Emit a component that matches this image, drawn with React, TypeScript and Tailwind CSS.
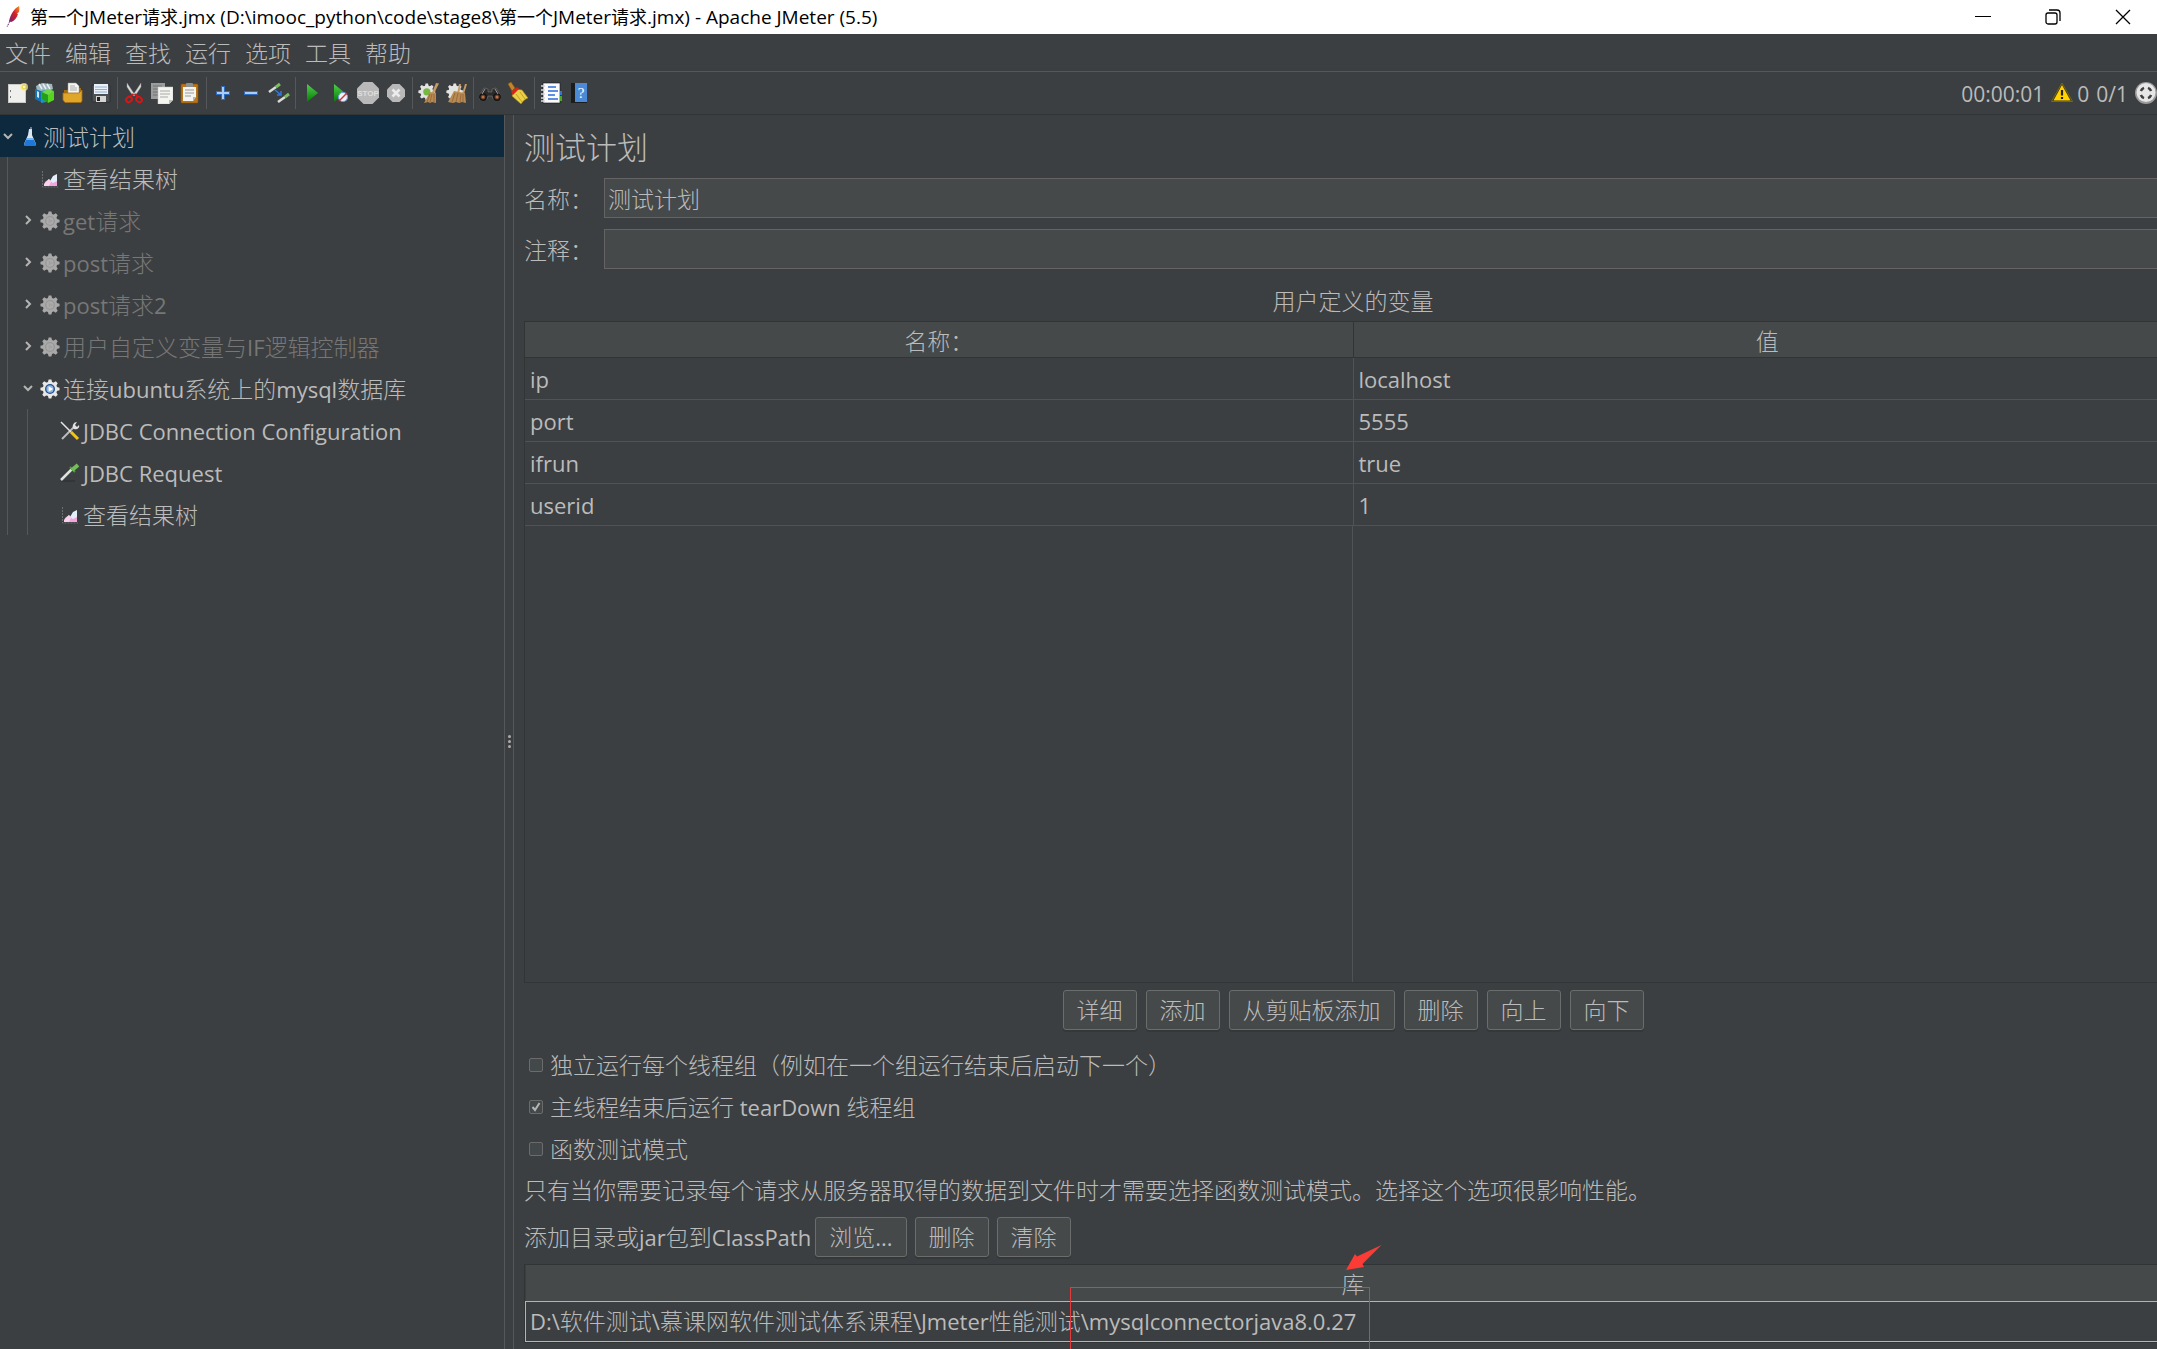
import { useState } from 'react'
import type { ReactNode } from 'react'

/* ---------- Icons ---------- */

function Feather() {
  return (
    <svg className="w-4 h-6" viewBox="0 0 16 24" aria-hidden="true">
      <defs>
        <linearGradient id="feather" x1="1" y1="0" x2="0" y2="1">
          <stop offset="0" stopColor="#f69923" />
          <stop offset="0.45" stopColor="#d22128" />
          <stop offset="1" stopColor="#6d2178" />
        </linearGradient>
      </defs>
      <path d="M13 1c-4 2-8 7-10 15l2 1c4-1 6-5 7-8l-1-.5 2-1.500c.6-3 .6-4 0-6z" fill="url(#feather)" />
      <path d="M4 16l-3 6" stroke="#6d2178" strokeWidth="1" strokeDasharray="2 1" fill="none" />
    </svg>
  )
}

function ToolSvg({ children }: { children: ReactNode }) {
  return (
    <svg className="w-[22px] h-[22px]" viewBox="0 0 22 22" aria-hidden="true">
      {children}
    </svg>
  )
}

const NewIcon = () => (
  <ToolSvg>
    <rect x="2.500" y="2.500" width="17" height="18" fill="#efefed" stroke="#c9c9c5" />
    <circle cx="18" cy="5" r="4" fill="#f6ee9a" opacity="0.7" />
    <circle cx="18" cy="5" r="2" fill="#fff6b0" stroke="#e6cf3a" />
    <path d="M4.500 8v2M4.500 14v2" stroke="#777" />
  </ToolSvg>
)

const TemplatesIcon = () => (
  <ToolSvg>
    <path d="M2 4l6-3 10 1 1 5-8 4-8-1z" fill="#9fb7bd" />
    <path d="M5 2l3 5M9 2l3 5M13 2l3 5" stroke="#e8f0f0" strokeWidth="1.500" />
    <path d="M1 7l6 2v11l-6-3z" fill="#1173b8" />
    <path d="M3 9l2 1v6l-2-1z" fill="#cfe6f5" />
    <path d="M7 9l5-1v12l-5 1z" fill="#1b95d0" />
    <path d="M8 10l6 3v8l-6-4z" fill="#22a01c" />
    <path d="M14 12l6-3v9l-6 3z" fill="#57d41e" />
    <path d="M8 10l6-3 6 2-6 4z" fill="#6fd84a" />
  </ToolSvg>
)

const OpenIcon = () => (
  <ToolSvg>
    <path d="M2 8h5l1-2h11v13H2z" fill="#a86c10" />
    <path d="M6 1h8l3 3v9H6z" fill="#f4f4f2" stroke="#999" strokeWidth="0.5" />
    <path d="M8 4h5M8 6h7M8 8h7" stroke="#aaa" />
    <path d="M1 11h16l3-3v11l-1 1.500H3L1 18z" fill="#e0a62a" stroke="#a86c10" strokeWidth="0.8" />
  </ToolSvg>
)

const SaveIcon = () => (
  <ToolSvg>
    <path d="M2 3h17l1 1v16H3l-1-1z" fill="#4e5154" stroke="#2a2c2e" strokeWidth="0.8" />
    <rect x="4" y="2" width="14" height="10" fill="#e9f0f7" />
    <path d="M5 5h12M5 7.500h12M5 10h12" stroke="#91b0d0" />
    <rect x="6" y="14" width="10" height="6" fill="#d6d6d4" />
    <rect x="7" y="15" width="3" height="4" fill="#222" />
  </ToolSvg>
)

const CutIcon = () => (
  <ToolSvg>
    <path d="M4 1l8 12-2 1L4 5zM18 1l-8 12 2 1 6-9z" fill="#dcdcda" stroke="#8c8c8a" strokeWidth="0.4" />
    <path d="M10 12l-3 3M12 12l3 3" stroke="#cc1212" strokeWidth="2" />
    <ellipse cx="6" cy="17.500" rx="3" ry="2.500" fill="none" stroke="#db1414" strokeWidth="2" transform="rotate(-35 6 17.500)" />
    <ellipse cx="16" cy="17.500" rx="3" ry="2.500" fill="none" stroke="#db1414" strokeWidth="2" transform="rotate(35 16 17.500)" />
  </ToolSvg>
)

const CopyIcon = () => (
  <ToolSvg>
    <rect x="0" y="1" width="14" height="16" fill="#9b9d9d" />
    <path d="M2 4h9M2 7h9M2 10h5M2 13h5" stroke="#6f7172" />
    <path d="M7 5h15v13l-4 4H7z" fill="#f4f4f1" stroke="#c4c4c0" strokeWidth="0.5" />
    <path d="M9 9h10M9 12h10M9 15h8" stroke="#a8a8a5" />
    <path d="M22 18h-4v4z" fill="#bcbcb8" />
  </ToolSvg>
)

const PasteIcon = () => (
  <ToolSvg>
    <rect x="2" y="2" width="17" height="19" rx="1" fill="#b9741a" stroke="#8b530c" strokeWidth="0.6" />
    <path d="M4 5h13v10l-3 4H4z" fill="#f3f3f1" />
    <rect x="7" y="1" width="7" height="4" rx="1" fill="#8d9091" />
    <path d="M6 8h9M6 11h9M6 14h6" stroke="#999" />
    <path d="M17 15h-3v4z" fill="#b5b5b0" />
  </ToolSvg>
)

const PlusIcon = () => (
  <ToolSvg>
    <path d="M11 4v14M4 11h14" stroke="#2f6cc0" strokeWidth="4" />
    <path d="M11 5v12M5 11h12" stroke="#a9cdf5" strokeWidth="2" />
  </ToolSvg>
)

const MinusIcon = () => (
  <ToolSvg>
    <path d="M4 11h14" stroke="#2f6cc0" strokeWidth="4" />
    <path d="M5 11h12" stroke="#a9cdf5" strokeWidth="2" />
  </ToolSvg>
)

const ToggleIcon = () => (
  <ToolSvg>
    <path d="M1 10l7-5" stroke="#d8dcd6" strokeWidth="2.500" />
    <path d="M8 5l4-3" stroke="#7cbf5e" strokeWidth="3" />
    <path d="M10 20l7-5" stroke="#d8dcd6" strokeWidth="2.500" />
    <path d="M17 15l4-3" stroke="#7cbf5e" strokeWidth="3" />
    <path d="M7 8l6 5M13 9v4H9" stroke="#2f78e0" strokeWidth="1.500" fill="none" />
  </ToolSvg>
)

const PlayIcon = () => (
  <ToolSvg>
    <defs>
      <linearGradient id="play" x1="0" y1="0" x2="0" y2="1">
        <stop offset="0" stopColor="#4ed04a" />
        <stop offset="1" stopColor="#067a06" />
      </linearGradient>
    </defs>
    <path d="M6 2l11 9-11 9z" fill="url(#play)" />
  </ToolSvg>
)

const PlayNoPauseIcon = () => (
  <ToolSvg>
    <path d="M5 2l11 9-11 9z" fill="url(#play)" />
    <circle cx="14" cy="15" r="4.500" fill="#eef3fb" stroke="#6d9ede" strokeWidth="1.200" />
    <path d="M10 19l8-8" stroke="#d5302c" strokeWidth="1.500" />
  </ToolSvg>
)

const StopIcon = () => (
  <ToolSvg>
    <path d="M6.500 0h9L22 6.500v9L15.500 22h-9L0 15.500v-9z" fill="#b9b9b9" />
    <text x="11" y="14" textAnchor="middle" fontSize="8" fontWeight="bold" fill="#dedede" fontFamily="Liberation Sans, sans-serif">
      STOP
    </text>
  </ToolSvg>
)

const ShutdownIcon = () => (
  <ToolSvg>
    <path d="M7.500 2h7L20 7.500v7L14.500 20h-7L2 14.500v-7z" fill="#b9b9b9" />
    <path d="M7.500 7.500l7 7M14.500 7.500l-7 7" stroke="#ececec" strokeWidth="2.500" />
  </ToolSvg>
)

// Eight-toothed wheel, shared by the toolbar and the thread groups
function GearShape({ fill }: { fill: string }) {
  return (
    <g fill={fill}>
      <circle cx="11" cy="11" r="8" />
      <path d="M9.500 0.500h3l1 4h-5zM9.500 21.500h3l1-4h-5zM.5 9.500v3l4 1v-5zM21.500 9.500v3l-4 1v-5z" />
      <path
        d="M9.500 0.500h3l1 4h-5zM9.500 21.500h3l1-4h-5zM.5 9.500v3l4 1v-5zM21.500 9.500v3l-4 1v-5z"
        transform="rotate(45 11 11)"
      />
    </g>
  )
}

const ClearIcon = () => (
  <ToolSvg>
    <g transform="translate(0 1) scale(0.8)">
      <GearShape fill="#e3e3e1" />
      <circle cx="11" cy="11" r="4.500" fill="#77b843" />
    </g>
    <path d="M18 1l3 .5-5 10-2-1z" fill="#c49a62" />
    <path d="M12 10l6 1v10l-4-1-2 1-2-1-4 1z" fill="#b98a52" />
    <path d="M12 12l-3 8M14 12l-2 8M16 12v8" stroke="#8a5f30" strokeWidth="0.7" />
  </ToolSvg>
)

const ClearAllIcon = () => (
  <ToolSvg>
    <g transform="translate(0 1) scale(0.8)">
      <GearShape fill="#e3e3e1" />
    </g>
    <path d="M13 2h2l-2 10h-2zM19 2h2l-3 10h-2z" fill="#c49a62" />
    <path d="M8 9l5 1 6 1 1 10-4-1-3 1-3-1-3 1-5-1z" fill="#b98a52" />
    <path d="M9 11l-3 9M12 11l-2 9M15 12l-1 8M17 12v8" stroke="#8a5f30" strokeWidth="0.7" />
  </ToolSvg>
)

const SearchIcon = () => (
  <ToolSvg>
    <path d="M5 6l4 1v3h4V7l4-1 5 8v3h-8l-1-3H9l-1 3H0v-3z" fill="#2b2b2b" stroke="#777" strokeWidth="0.6" />
    <circle cx="4" cy="15" r="3.200" fill="#5a3420" stroke="#151515" strokeWidth="1.400" />
    <circle cx="18" cy="15" r="3.200" fill="#5a3420" stroke="#151515" strokeWidth="1.400" />
    <circle cx="4" cy="15" r="1.500" fill="#b5744a" />
    <circle cx="18" cy="15" r="1.500" fill="#b5744a" />
    <path d="M6 7l-3 5M16 7l3 5" stroke="#9a9a9a" />
  </ToolSvg>
)

const BroomIcon = () => (
  <ToolSvg>
    <path d="M1 2l3-2 4 6-3 3z" fill="#c48528" stroke="#8a5810" strokeWidth="0.6" />
    <path d="M8 7l7 1 6 8c-3 1-5 3-7 6l-9-8z" fill="#ecd046" stroke="#a48612" strokeWidth="0.6" />
    <path d="M4 10l6-5 2 2-6 6z" fill="#d8241c" />
    <path d="M9 12l6 8M13 10l5 7" stroke="#b39a20" strokeWidth="0.8" />
  </ToolSvg>
)

const FunctionIcon = () => (
  <ToolSvg>
    <rect x="3" y="1" width="17" height="20" fill="#fbfbfb" stroke="#111" strokeWidth="0.6" />
    <rect x="20" y="9" width="2" height="4" fill="#2f74dd" />
    <rect x="20" y="14" width="2" height="5" fill="#48a824" />
    <path d="M8 5h8M8 9h10M8 13h7M8 17h10" stroke="#2a6cdc" strokeWidth="1.400" />
    <path d="M1 4h4M1 8h4M1 12h4M1 16h4M1 19h4" stroke="#d9d9d9" strokeWidth="1.500" />
  </ToolSvg>
)

const HelpIcon = () => (
  <ToolSvg>
    <path d="M3 1h16v20H3z" fill="#1a1c1e" />
    <rect x="7" y="1" width="12" height="19" fill="#4c8ad8" />
    <text x="13" y="16" textAnchor="middle" fontSize="15" fill="#fff" fontFamily="Liberation Serif, serif">
      ?
    </text>
  </ToolSvg>
)

const WarningIcon = () => (
  <ToolSvg>
    <path d="M11 1l10.500 18.500h-21z" fill="#3c3512" stroke="#8a7410" strokeWidth="0.8" />
    <path d="M11 3l8.500 15.500h-17z" fill="#ffd200" />
    <path d="M11 8v5.500M11 15v2" stroke="#222" strokeWidth="2.200" />
  </ToolSvg>
)

const TargetIcon = () => (
  <ToolSvg>
    <circle cx="11" cy="11" r="11" fill="#9b9b9b" />
    <circle cx="11" cy="10.500" r="9.500" fill="#e6e6e6" />
    {/* Four arcs centred on the diagonals */}
    <circle
      cx="11"
      cy="11"
      r="5.500"
      fill="none"
      stroke="#3f3f3f"
      strokeWidth="2.500"
      pathLength="8"
      strokeDasharray="1 1"
      strokeDashoffset="-0.5"
    />
  </ToolSvg>
)

const FlaskIcon = () => (
  <svg className="w-[14px] h-5" viewBox="0 0 14 20" aria-hidden="true">
    <path d="M6 2h3v6l4 9-1 2H2l-1-2 4-9z" fill="#dbe7f0" />
    <path d="M4 11h6l3 6-1 2H2l-1-2z" fill="#1f78d8" />
    <path d="M4 11h6l1 2H3z" fill="#79b6ef" />
    <path d="M8 0v3" stroke="#ccc" />
  </svg>
)

const ChartIcon = () => (
  <svg className="w-[18px] h-[18px]" viewBox="0 0 18 18" aria-hidden="true">
    <path d="M1.500 1v16H17" stroke="#6b6e70" strokeDasharray="2 1" fill="none" />
    <path d="M3 16l1-4 4-3 3 3 5-2v6z" fill="#f4a6dc" />
    <path d="M3 14l5-5 2 3-2 4H3z" fill="#fad0ee" />
    <path d="M9 11l3-5 4-2v7l-4 2z" fill="#e4effc" />
  </svg>
)

function GearIcon({ disabled }: { disabled?: boolean }) {
  return (
    <svg className="w-5 h-5" viewBox="0 0 22 22" aria-hidden="true">
      <GearShape fill={disabled ? '#a9a9a9' : '#e8e8e6'} />
      <circle cx="11" cy="11" r="5.500" fill={disabled ? '#989898' : '#24508c'} />
      <circle cx="11" cy="11" r="4" fill={disabled ? '#acacac' : '#8fb4e0'} />
      <path d="M9.500 8l5 3-5 3z" fill={disabled ? '#a2a2a2' : '#fff'} />
    </svg>
  )
}

const ToolsIcon = () => (
  <svg className="w-5 h-5" viewBox="0 0 20 20" aria-hidden="true">
    <path d="M2 18L14 6" stroke="#b9bcbc" strokeWidth="2" />
    <path d="M13 7c-1-3 1-6 4-6l-2 3 2 2 2-2c1 3-2 5-5 4z" fill="#e2e2e0" />
    <path d="M1 1l10 10" stroke="#e6e6e6" strokeWidth="1.500" />
    <path d="M11 11l7 7" stroke="#f2c21b" strokeWidth="3" />
  </svg>
)

const PipetteIcon = () => (
  <svg className="w-5 h-5" viewBox="0 0 20 20" aria-hidden="true">
    <path d="M1 18h14" stroke="#2b2d2e" />
    <path d="M1 17L12 6" stroke="#dfe3dd" strokeWidth="2.500" />
    <path d="M10 4l5 5" stroke="#4c9a3a" strokeWidth="2" />
    <path d="M12 7l6-5" stroke="#74bd58" strokeWidth="4" />
  </svg>
)

function Chevron({ open }: { open?: boolean }) {
  return (
    <svg className="w-3 h-3" viewBox="0 0 12 12" fill="none" stroke="#b4b4b4" strokeWidth="2" aria-hidden="true">
      {open ? <path d="M2 3l4 4 4-4" /> : <path d="M4 1l4 4-4 4" />}
    </svg>
  )
}

/* ---------- Text ---------- */

// Chinese is set light, the Latin runs inside it regular and one pixel smaller
function Mixed({ text, latin = 'text-[22px] font-normal' }: { text: string; latin?: string }) {
  return (
    <span>
      {text.split(/([\x20-\x7e]+)/).map((part, index) =>
        index % 2 === 1 ? (
          <span key={index} className={latin}>
            {part}
          </span>
        ) : (
          part
        )
      )}
    </span>
  )
}

/* ---------- Data ---------- */

const menus = ['文件', '编辑', '查找', '运行', '选项', '工具', '帮助']

const toolGroups = [
  [
    { label: '新建', icon: <NewIcon /> },
    { label: '模板', icon: <TemplatesIcon /> },
    { label: '打开', icon: <OpenIcon /> },
    { label: '保存', icon: <SaveIcon /> }
  ],
  [
    { label: '剪切', icon: <CutIcon /> },
    { label: '复制', icon: <CopyIcon /> },
    { label: '粘贴', icon: <PasteIcon /> }
  ],
  [
    { label: '展开', icon: <PlusIcon /> },
    { label: '折叠', icon: <MinusIcon /> },
    { label: '切换', icon: <ToggleIcon /> }
  ],
  [
    { label: '启动', icon: <PlayIcon /> },
    { label: '不停顿启动', icon: <PlayNoPauseIcon /> },
    { label: '停止', icon: <StopIcon /> },
    { label: '关闭', icon: <ShutdownIcon /> }
  ],
  [
    { label: '清除', icon: <ClearIcon /> },
    { label: '清除全部', icon: <ClearAllIcon /> }
  ],
  [
    { label: '查找', icon: <SearchIcon /> },
    { label: '重置查找', icon: <BroomIcon /> }
  ],
  [
    { label: '函数助手', icon: <FunctionIcon /> },
    { label: '帮助', icon: <HelpIcon /> }
  ]
]

const variables = [
  { name: 'ip', value: 'localhost' },
  { name: 'port', value: '5555' },
  { name: 'ifrun', value: 'true' },
  { name: 'userid', value: '1' }
]

const variableActions = ['详细', '添加', '从剪贴板添加', '删除', '向上', '向下']

/* ---------- Tree ---------- */

interface TreeRowProps {
  label: string
  icon: ReactNode
  arrow?: 'open' | 'closed'
  disabled?: boolean
}

function TreeRow({ label, icon, arrow, disabled }: TreeRowProps) {
  return (
    <div className={`flex h-[42px] items-center pt-0.5 whitespace-nowrap ${disabled ? 'text-[#777777]' : 'text-[#bbbbbb]'}`}>
      <span className="w-[18px] shrink-0">{arrow && <Chevron open={arrow === 'open'} />}</span>
      <span className="mr-[3px] flex w-5 shrink-0 justify-center">{icon}</span>
      <Mixed text={label} />
    </div>
  )
}

function TestTree() {
  return (
    <nav className="w-[505px] shrink-0 overflow-hidden border-r border-[#555759]">
      <div className="bg-[#0d293e] pl-0.5">
        <TreeRow label="测试计划" icon={<FlaskIcon />} arrow="open" />
      </div>
      <div className="ml-[7px] border-l border-[#555759] pl-[14px]">
        <TreeRow label="查看结果树" icon={<ChartIcon />} />
        <TreeRow label="get请求" icon={<GearIcon disabled />} arrow="closed" disabled />
        <TreeRow label="post请求" icon={<GearIcon disabled />} arrow="closed" disabled />
        <TreeRow label="post请求2" icon={<GearIcon disabled />} arrow="closed" disabled />
        <TreeRow label="用户自定义变量与IF逻辑控制器" icon={<GearIcon disabled />} arrow="closed" disabled />
        <TreeRow label="连接ubuntu系统上的mysql数据库" icon={<GearIcon />} arrow="open" />
        <div className="ml-[5px] border-l border-[#555759] pl-[14px]">
          <TreeRow label="JDBC Connection Configuration" icon={<ToolsIcon />} />
          <TreeRow label="JDBC Request" icon={<PipetteIcon />} />
          <TreeRow label="查看结果树" icon={<ChartIcon />} />
        </div>
      </div>
    </nav>
  )
}

/* ---------- Editor ---------- */

function PanelButton({ label }: { label: string }) {
  return (
    <button
      type="button"
      className="h-10 rounded-[3px] border border-[#6b6d6d] bg-[#45494a] px-[13px] pt-0.5 shadow-[0_2px_0_#353839]"
    >
      <Mixed text={label} />
    </button>
  )
}

interface FieldProps {
  id: string
  label: string
  value: string
  onChange: (value: string) => void
}

function Field({ id, label, value, onChange }: FieldProps) {
  return (
    <div className="flex h-10 items-center">
      <label htmlFor={id} className="w-20 shrink-0 pt-0.5">
        {label}
      </label>
      <input
        id={id}
        value={value}
        onChange={(e) => onChange(e.target.value)}
        className="h-10 min-w-0 flex-1 border border-[#646464] bg-[#45494a] px-[3px] outline-none"
      />
    </div>
  )
}

interface OptionProps {
  label: string
  checked: boolean
  onChange: (checked: boolean) => void
}

function Option({ label, checked, onChange }: OptionProps) {
  return (
    <label className="flex h-[42px] items-center gap-[7px] pl-[5px]">
      <span className="grid h-[14px] w-[14px]">
        <input
          type="checkbox"
          checked={checked}
          onChange={(e) => onChange(e.target.checked)}
          className="col-start-1 row-start-1 h-[14px] w-[14px] appearance-none rounded-[2px] border border-[#6b6b6b] bg-[#43494a]"
        />
        {checked && (
          <svg
            className="pointer-events-none col-start-1 row-start-1 h-[14px] w-[14px]"
            viewBox="0 0 14 14"
            fill="none"
            stroke="#b4b4b4"
            strokeWidth="2"
            aria-hidden="true"
          >
            <path d="M3.500 7l2.500 3 4.500-7" />
          </svg>
        )}
      </span>
      <span className="pt-0.5">
        <Mixed text={label} />
      </span>
    </label>
  )
}

function TestPlanEditor() {
  const [name, setName] = useState('测试计划')
  const [comment, setComment] = useState('')
  const [serialized, setSerialized] = useState(false)
  const [tearDown, setTearDown] = useState(true)
  const [functional, setFunctional] = useState(false)

  return (
    <main className="min-w-0 flex-1 overflow-hidden border-l border-[#555759] pl-[10px]">
      {/* The form is a little wider than the visible pane */}
      <div className="flex h-full w-[calc(100%+25px)] flex-col">
        <h1 className="flex h-[63px] items-center pt-0.5 text-[31px] leading-none font-light">测试计划</h1>

        <Field id="plan-name" label="名称：" value={name} onChange={setName} />
        <div className="mt-[11px]">
          <Field id="plan-comment" label="注释：" value={comment} onChange={setComment} />
        </div>

        <h2 className="mt-3 flex h-10 items-center justify-center font-light">用户定义的变量</h2>

        <div className="flex flex-1 flex-col border border-[#323536]">
          <table className="w-full table-fixed border-collapse">
            <thead className="bg-[#45494a]">
              <tr className="h-[35px] border-b border-[#323536]">
                <th className="border-r border-[#323536] p-0 pt-1 font-light">名称：</th>
                <th className="p-0 pt-1 font-light">值</th>
              </tr>
            </thead>
            <tbody>
              {variables.map((row) => (
                <tr key={row.name} className="h-[42px] border-b border-[#505355]">
                  <td className="border-r border-[#505355] px-[5px] pt-0.5 pb-0">
                    <Mixed text={row.name} />
                  </td>
                  <td className="px-[5px] pt-0.5 pb-0">
                    <Mixed text={row.value} />
                  </td>
                </tr>
              ))}
            </tbody>
          </table>
          <div className="grid flex-1 grid-cols-2">
            <div className="border-r border-[#505355]" />
          </div>
        </div>

        <div className="mt-[7px] flex justify-center gap-[9px]">
          {variableActions.map((action) => (
            <PanelButton key={action} label={action} />
          ))}
        </div>

        <div className="mt-[14px]">
          <Option label="独立运行每个线程组（例如在一个组运行结束后启动下一个）" checked={serialized} onChange={setSerialized} />
          <Option label="主线程结束后运行 tearDown 线程组" checked={tearDown} onChange={setTearDown} />
          <Option label="函数测试模式" checked={functional} onChange={setFunctional} />
        </div>
        <p className="flex h-10 items-center pt-0.5">
          只有当你需要记录每个请求从服务器取得的数据到文件时才需要选择函数测试模式。选择这个选项很影响性能。
        </p>

        <div className="mt-[7px] flex items-center gap-1">
          <span className="pt-0.5">
            <Mixed text="添加目录或jar包到ClassPath" />
          </span>
          <div className="flex gap-2">
            <PanelButton label="浏览..." />
            <PanelButton label="删除" />
            <PanelButton label="清除" />
          </div>
        </div>

        <div className="relative mt-[7px] border border-[#323536]">
          <table className="w-full border-collapse">
            <thead className="bg-[#45494a]">
              <tr className="h-[37px]">
                <th className="p-0 pt-1 font-light">库</th>
              </tr>
            </thead>
            <tbody>
              <tr className="h-10">
                <td className="border border-[#7cc3f7] px-1 py-0">
                  <Mixed text="D:\软件测试\慕课网软件测试体系课程\Jmeter性能测试\mysqlconnectorjava8.0.27" />
                </td>
              </tr>
            </tbody>
          </table>
          {/* Red annotation over the library table */}
          <div className="absolute left-[545px] top-[22px] h-20 w-[300px] border border-[#e23b3b]" />
          <svg className="absolute left-[821px] top-[-20px] h-[26px] w-9" viewBox="0 0 36 26" aria-hidden="true">
            <path d="M35.500 0L11 11.500 9 9 0 25l18-3-1.500-3z" fill="#fb3b36" />
          </svg>
        </div>
        <div className="h-[6px]" />
      </div>
    </main>
  )
}

/* ---------- Window ---------- */

function TitleBar() {
  return (
    <header className="flex h-[34px] shrink-0 items-center bg-white text-[18px] font-normal text-black">
      <div className="flex flex-1 items-center gap-2 whitespace-nowrap pl-[6px]">
        <Feather />
        <Mixed
          text="第一个JMeter请求.jmx (D:\imooc_python\code\stage8\第一个JMeter请求.jmx) - Apache JMeter (5.5)"
          latin="text-[19px]"
        />
      </div>
      <div className="flex gap-0.5">
        <button type="button" aria-label="最小化" className="flex h-[34px] w-[68px] items-center justify-center">
          <svg className="h-4 w-4" viewBox="0 0 16 16" stroke="#000" aria-hidden="true">
            <path d="M0 7.500h16" />
          </svg>
        </button>
        <button type="button" aria-label="还原" className="flex h-[34px] w-[68px] items-center justify-center">
          <svg className="h-4 w-4" viewBox="0 0 16 16" fill="none" stroke="#000" strokeWidth="1.300" aria-hidden="true">
            <rect x="1" y="4" width="11" height="11" rx="2" />
            <path d="M4 1h8a3 3 0 013 3v8" />
          </svg>
        </button>
        <button type="button" aria-label="关闭" className="flex h-[34px] w-[68px] items-center justify-center">
          <svg className="h-4 w-4" viewBox="0 0 16 16" stroke="#000" strokeWidth="1.300" aria-hidden="true">
            <path d="M1 1l14 14M15 1L1 15" />
          </svg>
        </button>
      </div>
    </header>
  )
}

function MenuBar() {
  return (
    <nav className="flex h-[38px] shrink-0 items-center gap-[14px] border-b border-[#555759] px-[5px] pt-0.5">
      {menus.map((menu) => (
        <button key={menu} type="button">
          {menu}
        </button>
      ))}
    </nav>
  )
}

function ToolBar() {
  return (
    <div className="flex h-[43px] shrink-0 items-center border-b border-[#323536]">
      {toolGroups.map((group, index) => (
        <div
          key={index}
          className={`flex h-8 items-center gap-[6px] pr-[5px] ${index > 0 ? 'border-l border-[#555759] pl-[5px]' : 'pl-[6px]'}`}
        >
          {group.map((item) => (
            <button key={item.label} type="button" aria-label={item.label} className="flex">
              {item.icon}
            </button>
          ))}
        </div>
      ))}
      <div className="ml-auto flex items-center gap-[7px] text-[21px] font-normal">
        <span className="pt-0.5">00:00:01</span>
        <span className="flex items-center gap-1">
          <WarningIcon />
          <span className="pt-0.5">0</span>
        </span>
        <span className="pt-0.5">0/1</span>
        <TargetIcon />
      </div>
    </div>
  )
}

export default function App() {
  return (
    <div className="flex h-screen flex-col overflow-hidden bg-[#3c3f41] font-['Open_Sans','Noto_Sans_CJK_SC',sans-serif] text-[23px] leading-none font-light text-[#bbbbbb]">
      <TitleBar />
      <MenuBar />
      <ToolBar />
      <div className="flex min-h-0 flex-1">
        <TestTree />
        <div className="flex w-2 shrink-0 flex-col items-center justify-center gap-0.5 pt-[18px]">
          <span className="h-[3px] w-[3px] rounded-full bg-[#adadad]" />
          <span className="h-[3px] w-[3px] rounded-full bg-[#adadad]" />
          <span className="h-[3px] w-[3px] rounded-full bg-[#adadad]" />
        </div>
        <TestPlanEditor />
      </div>
    </div>
  )
}
